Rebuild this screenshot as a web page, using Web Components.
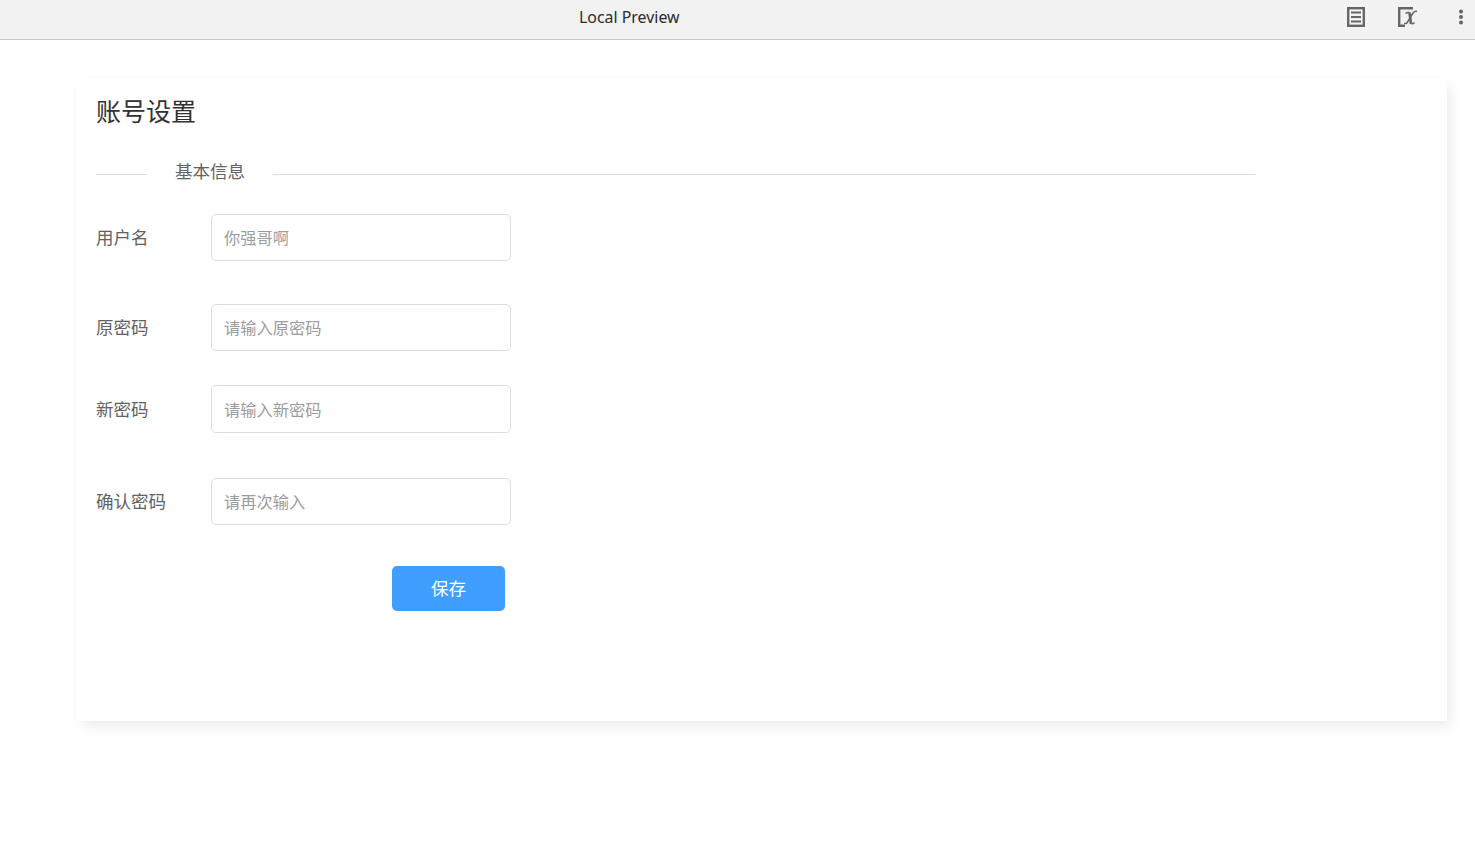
<!DOCTYPE html>
<html lang="zh">
<head>
<meta charset="utf-8">
<title>Local Preview</title>
<style>
  html, body { margin: 0; height: 100%; background: #fff; }
  body { font-family: "Noto Sans CJK SC", "Noto Sans", sans-serif; }
</style>
</head>
<body>
<preview-bar>Local Preview</preview-bar>
<settings-card heading="账号设置">
  <form-divider>基本信息</form-divider>
  <form-row label="用户名" top="30" height="47">你强哥啊</form-row>
  <form-row label="原密码" top="43" height="47">请输入原密码</form-row>
  <form-row label="新密码" top="34" height="48">请输入新密码</form-row>
  <form-row label="确认密码" top="45" height="47">请再次输入</form-row>
  <save-button>保存</save-button>
</settings-card>

<script>
// top bar of the preview window
class PreviewBar extends HTMLElement {
  connectedCallback() {
    const shadow = this.attachShadow({ mode: "open" });
    shadow.innerHTML = `
    <style>
      :host {
        display: flex;
        align-items: center;
        box-sizing: border-box;
        height: 40px;
        padding-bottom: 5px;
        background: #f2f2f2;
        border-bottom: 1px solid #c9c9c9;
        color: #2b2b2b;
        font: 15.900px "Noto Sans", sans-serif;
      }
      .title { margin-left: 579px; flex: 1; }
      .icons { display: flex; align-items: center; }
      svg { display: block; fill: none; }
    </style>
    <div class="title"><slot></slot></div>
    <div class="icons">
      <svg width="18" height="20" viewBox="0 0 18 20" style="margin-right:33px">
        <rect x="1.200" y="1.200" width="15.600" height="17.600" stroke="#666" stroke-width="2.400"/>
        <path d="M4 5.500h10M4 10h10M4 14.500h10" stroke="#666" stroke-width="2"/>
      </svg>
      <svg width="20" height="20" viewBox="0 0 20 20" style="margin-right:40px">
        <path d="M15 1.200H1.200v17.600H7" stroke="#666" stroke-width="2.400"/>
        <path d="M11.500 5.500l1.500 11.500" stroke="#666" stroke-width="2.600"/>
        <path d="M7.500 6.500c1.200-1 2.500-1.300 4-1M13.500 16.800c1.200.2 2.200-.3 3-1.300M19 4.500c-1.500-.5-2.800.2-3.800 1.300L9.200 15.500c-.8 1.200-2 1.300-3 .5" stroke="#666" stroke-width="1.500"/>
      </svg>
      <svg width="6" height="16" viewBox="0 0 6 16" style="margin-right:11px">
        <circle cx="3" cy="2.500" r="2" fill="#666"/>
        <circle cx="3" cy="8" r="2" fill="#666"/>
        <circle cx="3" cy="13.500" r="2" fill="#666"/>
      </svg>
    </div>
    `;
  }
}
customElements.define("preview-bar", PreviewBar);

// white card holding the form
class SettingsCard extends HTMLElement {
  connectedCallback() {
    const shadow = this.attachShadow({ mode: "open" });
    shadow.innerHTML = `
    <style>
      :host {
        display: block;
        box-sizing: border-box;
        width: 1371px;
        height: 643px;
        margin: 38px 0 0 76px;
        padding: 14px 20px;
        background: #fff;
        box-shadow: 0 0 4px rgba(0, 0, 0, .02), 5px 7px 12px -1px rgba(0, 0, 0, .07);
      }
      h1 {
        margin: 0;
        height: 36px;
        font-size: 25px;
        font-weight: 400;
        line-height: 36px;
        color: #303133;
      }
    </style>
    <h1>${this.getAttribute("heading")}</h1>
    <slot></slot>
    `;
  }
}
customElements.define("settings-card", SettingsCard);

// line with a title sitting in it
class FormDivider extends HTMLElement {
  connectedCallback() {
    const shadow = this.attachShadow({ mode: "open" });
    shadow.innerHTML = `
    <style>
      :host {
        display: flex;
        align-items: center;
        width: 1160px;
        height: 26px;
        margin-top: 30px;
        font-size: 17.500px;
        line-height: 26px;
        color: #606266;
      }
      i { display: block; height: 1px; margin-top: 7px; background: #dcdde8; }
      .left { width: 51px; }
      .right { flex: 1; }
      span { padding: 0 28px 1px; }
    </style>
    <i class="left"></i><span><slot></slot></span><i class="right"></i>
    `;
  }
}
customElements.define("form-divider", FormDivider);

// label plus input box
class FormRow extends HTMLElement {
  connectedCallback() {
    const shadow = this.attachShadow({ mode: "open" });
    shadow.innerHTML = `
    <style>
      :host {
        display: flex;
        align-items: center;
        height: ${this.getAttribute("height")}px;
        margin-top: ${this.getAttribute("top")}px;
      }
      label {
        width: 115px;
        padding-bottom: 2px;
        font-size: 17.500px;
        color: #606266;
      }
      .box {
        box-sizing: border-box;
        display: flex;
        align-items: center;
        width: 300px;
        height: 100%;
        padding: 0 12px 1px;
        border: 1px solid #dcdde8;
        border-radius: 5px;
        background: #fff;
        font-size: 16.250px;
        color: #9c9c9f;
      }
    </style>
    <label>${this.getAttribute("label")}</label>
    <div class="box"><slot></slot></div>
    `;
  }
}
customElements.define("form-row", FormRow);

class SaveButton extends HTMLElement {
  connectedCallback() {
    const shadow = this.attachShadow({ mode: "open" });
    shadow.innerHTML = `
    <style>
      :host {
        display: flex;
        align-items: center;
        justify-content: center;
        box-sizing: border-box;
        width: 113px;
        height: 45px;
        margin: 41px 0 0 296px;
        padding-bottom: 2px;
        border-radius: 5px;
        background: #409eff;
        color: #fff;
        font-size: 17.500px;
      }
    </style>
    <slot></slot>
    `;
  }
}
customElements.define("save-button", SaveButton);
</script>
</body>
</html>
